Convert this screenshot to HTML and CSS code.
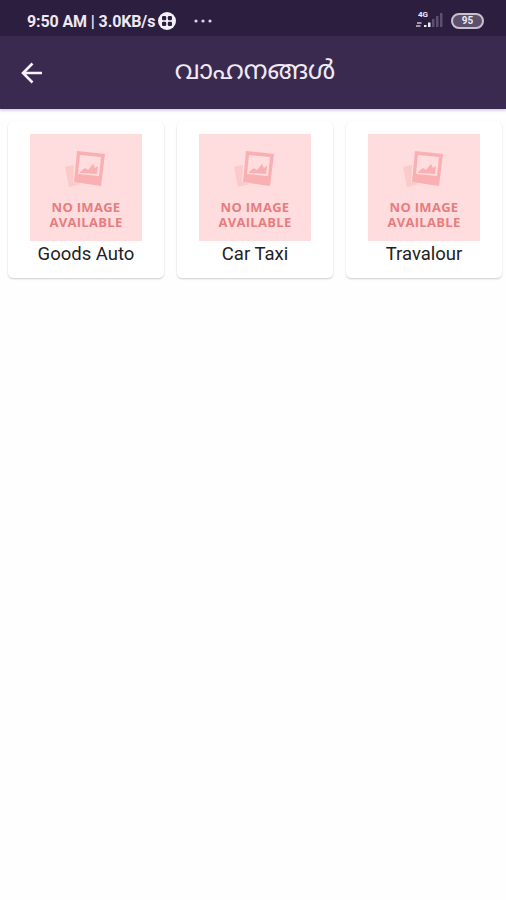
FILE: index.html
```html
<!DOCTYPE html>
<html lang="ml">

<head>
  <meta charset="UTF-8">
  <meta name="viewport" content="width=device-width, initial-scale=1.0">
  <title>വാഹനങ്ങൾ</title>
  <link rel="stylesheet" href="styles.css">
</head>

<body>
  <svg width="0" height="0" class="defs">
    <symbol id="photos" viewBox="0 0 44 44">
      <path d="M2 19l9-2-1 17 8 2-12 3z" fill="#fccacb" />
      <path d="M14 3l28 3-4 32-27-4z" fill="#f8b0b3" />
      <path d="M17 7l21 2-2 19-21-2z" fill="#ffdcdd" />
      <path d="M17 24l5-4 3 2 5-6 2 4 3-2-1 8-17-1z" fill="#f8b0b3" />
    </symbol>
  </svg>

  <div class="status">
    <span class="clock">9:50 AM | 3.0KB/s</span>
    <svg class="app-dot" width="18" height="18" viewBox="0 0 18 18">
      <circle cx="9" cy="9" r="9" fill="#f4f0f8" />
      <g fill="#2c1e3e">
        <rect x="4" y="4" width="4.2" height="4.2" rx="1.3" />
        <rect x="9.8" y="4" width="4.2" height="4.2" rx="1.3" />
        <rect x="4" y="9.8" width="4.2" height="4.2" rx="1.3" />
        <rect x="9.8" y="9.8" width="4.2" height="4.2" rx="1.3" />
      </g>
    </svg>
    <svg class="dots" width="18" height="4" viewBox="0 0 18 4" fill="#ddd6e4">
      <circle cx="2" cy="2" r="1.6" />
      <circle cx="9" cy="2" r="1.6" />
      <circle cx="16" cy="2" r="1.6" />
    </svg>
    <div class="network">
      <span class="net-type">4G</span>
      <svg width="28" height="15" viewBox="0 0 28 15">
        <path d="M2 10h4.500M1 13h4.500" stroke="#c7c0cf" stroke-width="1.600" />
        <path d="M9 12h2.500v2H9zM13 9.500h2.500V14H13z" fill="#f0ecf4" />
        <path d="M17 6h2.500v8H17zM21 3h2.500v11H21zM25 0h2.500v14H25z" fill="#5d506c" />
      </svg>
    </div>
    <span class="battery">95</span>
  </div>

  <header class="bar">
    <svg class="back" width="22" height="22" viewBox="0 0 22 22" fill="none" stroke="#f6f1fa" stroke-width="2.600">
      <path d="M21 11H2.500M11.500 1.500L2 11l9.500 9.500" />
    </svg>
    <h1 class="title">വാഹനങ്ങൾ</h1>
  </header>

  <main class="grid">
    <div class="card">
      <div class="no-image">
        <svg class="photos" width="44" height="44"><use href="#photos" /></svg>
        NO IMAGE<br>AVAILABLE
      </div>
      <div class="name">Goods Auto</div>
    </div>
    <div class="card">
      <div class="no-image">
        <svg class="photos" width="44" height="44"><use href="#photos" /></svg>
        NO IMAGE<br>AVAILABLE
      </div>
      <div class="name">Car Taxi</div>
    </div>
    <div class="card">
      <div class="no-image">
        <svg class="photos" width="44" height="44"><use href="#photos" /></svg>
        NO IMAGE<br>AVAILABLE
      </div>
      <div class="name">Travalour</div>
    </div>
  </main>
</body>

</html>
```
FILE: styles.css
```css
body {
  margin: 0;
  min-height: 900px;
  background: #fefefe;
  font-family: Roboto, sans-serif;
}

.defs {
  display: block;
}

/* Phone status bar */
.status {
  display: flex;
  align-items: center;
  box-sizing: border-box;
  height: 36px;
  padding: 5px 22px 0 27px;
  background: #2c1e3e;
  color: #eee8f3;
}

.clock {
  width: 129px;
  padding-top: 1px;
  font-size: 16px;
  font-weight: 700;
  letter-spacing: -0.12px;
  white-space: nowrap;
}

.app-dot {
  margin-left: 2px;
}

.dots {
  margin-left: 18px;
}

.network {
  position: relative;
  height: 15px;
  margin-left: auto;
}

.net-type {
  position: absolute;
  top: -2px;
  left: 3px;
  font-size: 8px;
  font-weight: 700;
  line-height: 8px;
}

.battery {
  box-sizing: border-box;
  width: 33px;
  height: 16px;
  margin-left: 8px;
  border: 2px solid #c7c0cf;
  border-radius: 8px;
  background: #5d506c;
  font-size: 10px;
  font-weight: 700;
  line-height: 12px;
  text-align: center;
}

/* Title bar */
.bar {
  display: grid;
  grid-template-columns: 22px 1fr 18px;
  align-items: center;
  box-sizing: border-box;
  height: 73px;
  padding: 0 21px;
  background: #3b2a50;
  box-shadow: 0 2px 2px #ddd3e9;
}

.title {
  margin: 0;
  padding-bottom: 6px;
  color: #efe9f4;
  font-family: Roboto, "Noto Sans Malayalam", "Noto Sans", sans-serif;
  font-size: 26px;
  font-weight: 400;
  line-height: 36px;
  text-align: center;
  white-space: nowrap;
}

/* Vehicle cards */
.grid {
  display: grid;
  grid-template-columns: repeat(3, 156px);
  gap: 13px;
  padding: 13px 0 0 8px;
}

.card {
  box-sizing: border-box;
  height: 156px;
  padding-top: 12px;
  border-radius: 5px;
  background: #fff;
  box-shadow: 0 1px 2px rgba(0, 0, 0, 0.2);
}

.no-image {
  box-sizing: border-box;
  width: 112px;
  height: 107px;
  margin: 0 auto;
  padding-top: 14px;
  background: #ffdcdd;
  color: #e67d80;
  font-family: "Open Sans", sans-serif;
  font-size: 13px;
  font-weight: 700;
  line-height: 15px;
  letter-spacing: 0.3px;
  text-align: center;
}

.photos {
  display: block;
  margin: 0 auto 8px 33px;
}

.name {
  padding-top: 1px;
  color: #222;
  font-size: 18.5px;
  line-height: 25px;
  text-align: center;
}
```
